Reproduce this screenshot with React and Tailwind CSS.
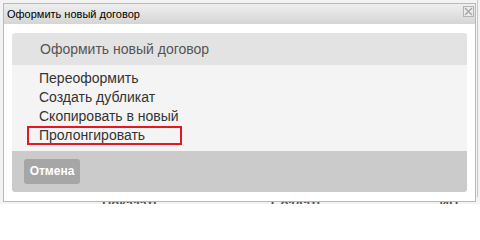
import React from 'react';

const items = ['Переоформить', 'Создать дубликат', 'Скопировать в новый', 'Пролонгировать'];

export default function App() {
  return (
    <div className="relative w-[480px] h-[204px] overflow-hidden bg-[#f3f3f3]" style={{ fontFamily: '"Liberation Sans", Arial, sans-serif' }}>
      {/* page behind the dialog */}
      <div className="h-[197px] border-r border-[#c8c8c8] w-[478px]" />
      <div className="flex text-[13px] text-[#555] leading-[14px] font-bold">
        <span className="ml-[102px]">Показать</span>
        <span className="ml-[110px]">Создать</span>
        <span className="ml-[115px]">ИП</span>
      </div>

      {/* dialog */}
      <div className="absolute left-[3px] top-[3px] w-[473px] h-[199px] border border-[#b9b9b9] bg-white flex flex-col">
        <div className="h-[20px] flex items-start justify-between pl-[3px] pr-[1px] bg-gradient-to-b from-[#efefef] to-[#d5d5d5]">
          <span className="text-[11px] leading-[20px] text-black">Оформить новый договор</span>
          <span className="mt-[2px] w-[11px] h-[11px] border border-[#b3b3b3] bg-[#ececec] flex items-center justify-center">
            <svg width="9" height="9" viewBox="0 0 9 9">
              <path d="M1 1 L8 8 M8 1 L1 8" stroke="#a8a8a8" strokeWidth="1.5" />
            </svg>
          </span>
        </div>

        <div className="mt-[9px] ml-[8px] w-[455px] h-[159px] rounded-[3px] overflow-hidden flex flex-col">
          <div className="h-[32px] bg-[#e3e3e3] flex items-center pl-[28px] text-[14px] text-[#555]">
            Оформить новый договор
          </div>
          <div className="h-[86px] bg-[#f4f4f4] pt-[4px] pl-[15px]">
            {items.map((it, i) => (
              <div
                key={it}
                className={
                  i === 3
                    ? 'w-[155px] h-[19px] border-2 border-[#e81620] pl-[10px] flex items-center text-[14px] text-[#333]'
                    : 'h-[19px] pl-[12px] flex items-center text-[14px] text-[#333]'
                }
              >
                {it}
              </div>
            ))}
          </div>
          <div className="flex-1 bg-[#cbcbcb] pt-[7px] pl-[12px]">
            <button className="w-[56px] h-[25px] rounded-[3px] bg-[#a6a6a6] text-white text-[12px] font-bold">
              Отмена
            </button>
          </div>
        </div>
      </div>
    </div>
  );
}
